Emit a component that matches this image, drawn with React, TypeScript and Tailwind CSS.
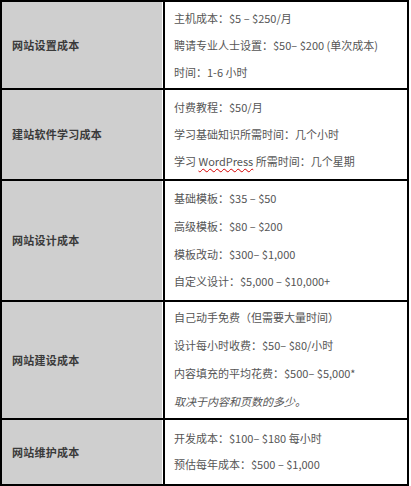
import React from "react";

type Row = {
  title: string;
  h: string;
  lh: string;
  lines: React.ReactNode[];
};

const rows: Row[] = [
  {
    title: "网站设置成本",
    h: "h-[88px]",
    lh: "leading-[27px]",
    lines: [
      "主机成本：$5 – $250/月",
      "聘请专业人士设置：$50– $200 (单次成本)",
      "时间：1-6 小时",
    ],
  },
  {
    title: "建站软件学习成本",
    h: "h-[91px]",
    lh: "leading-[27px]",
    lines: [
      "付费教程：$50/月",
      "学习基础知识所需时间：几个小时",
      <>
        学习{" "}
        <span className="underline decoration-wavy decoration-[#d40000] decoration-[1px] underline-offset-[2px]">
          WordPress
        </span>{" "}
        所需时间：几个星期
      </>,
    ],
  },
  {
    title: "网站设计成本",
    h: "h-[121px]",
    lh: "leading-[27.8px]",
    lines: [
      "基础模板：$35 – $50",
      "高级模板：$80 – $200",
      "模板改动：$300– $1,000",
      "自定义设计：$5,000 – $10,000+",
    ],
  },
  {
    title: "网站建设成本",
    h: "h-[118px]",
    lh: "leading-[27.8px]",
    lines: [
      "自己动手免费（但需要大量时间）",
      "设计每小时收费：$50– $80/小时",
      "内容填充的平均花费：$500– $5,000*",
      <span className="italic">取决于内容和页数的多少。</span>,
    ],
  },
  {
    title: "网站维护成本",
    h: "h-[64px]",
    lh: "leading-[25.7px]",
    lines: ["开发成本：$100– $180 每小时", "预估每年成本：$500 – $1,000"],
  },
];

export default function App() {
  return (
    <div
      className="w-[411px] h-[486px] bg-white"
      style={{ fontFamily: '"Noto Sans CJK SC", "Noto Sans", sans-serif' }}
    >
      <div className="w-[409px] border-2 border-black divide-y-2 divide-black">
        {rows.map((r, i) => (
          <div key={i} className={`flex ${r.h}`}>
            <div className="w-[161px] bg-[#cfcfcf] border-r border-white flex items-center pl-[10px]">
              <span className="text-[11px] font-bold text-[#3a3a3a] tracking-[0.25px]">
                {r.title}
              </span>
            </div>
            <div
              className={`flex-1 border-l-2 border-black flex flex-col justify-center pl-[9px] text-[11px] text-[#555555] ${r.lh}`}
            >
              {r.lines.map((l, j) => (
                <div key={j} className="whitespace-nowrap">
                  {l}
                </div>
              ))}
            </div>
          </div>
        ))}
      </div>
    </div>
  );
}
